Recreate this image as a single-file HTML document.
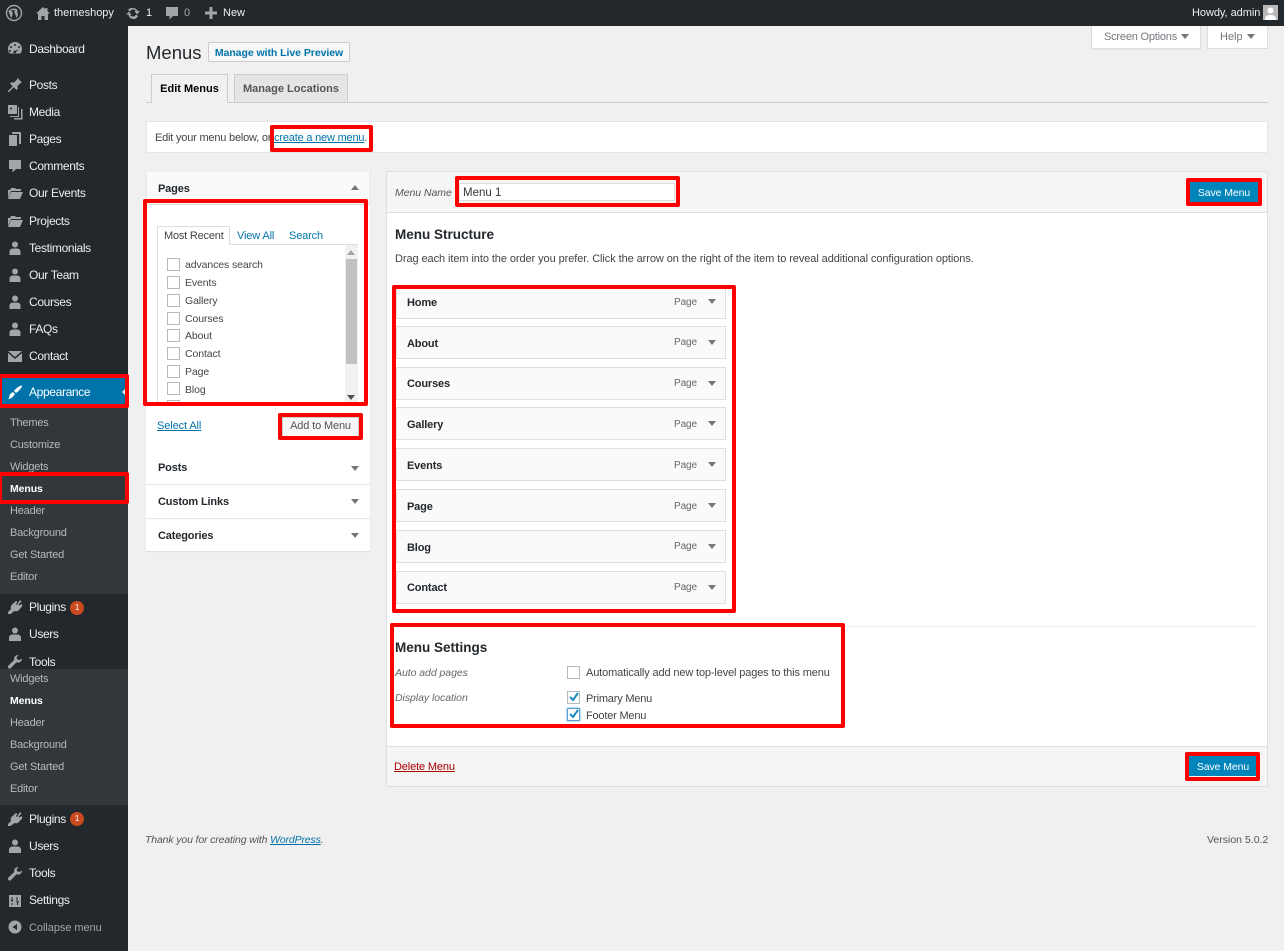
<!DOCTYPE html>
<html lang="en"><head><meta charset="utf-8"><title>Menus</title>
<style>
html,body{margin:0;padding:0;width:1284px;height:951px;overflow:hidden;background:#f0f0f0;font-family:"Liberation Sans",sans-serif;font-size:11px;letter-spacing:-.14px;color:#444}
.a{position:absolute;box-sizing:border-box}
.t{position:absolute;white-space:nowrap;line-height:18px;height:18px}
.m{color:#eee;font-size:12px;letter-spacing:-.35px;left:29px;line-height:16px;height:16px}
.s{color:#b4b9be;font-size:11px;letter-spacing:-.2px;left:10px}
.b{font-weight:bold;font-size:11px;letter-spacing:-.15px}
.l{color:#0073aa;text-decoration:underline}
.r{position:absolute;box-sizing:border-box;border:4px solid #f00;border-radius:2px}
.i{position:absolute;left:7px;width:16px;height:16px;fill:#a0a5aa}
.item{position:absolute;left:396px;width:330px;height:33px;box-sizing:border-box;background:#fafafa;border:1px solid #dfdfdf}
.cb{position:absolute;box-sizing:border-box;width:13px;height:13px;background:#fff;border:1px solid #b4b9be}
.tri{position:absolute;width:0;height:0;border-left:4px solid transparent;border-right:4px solid transparent;border-top:5px solid #72777c}
.up{border-top:0;border-bottom:5px solid #72777c}
.li{left:185px;font-size:10.5px;letter-spacing:-.1px}
.pg{left:674px;font-size:10px;letter-spacing:-.1px;color:#666}
.it{font-style:italic;color:#666;font-size:10.5px;letter-spacing:-.05px}
.sv{background:#0085ba;color:#fff;font-size:10.5px;letter-spacing:-.1px;line-height:22px;text-align:center}
</style></head><body>

<div class="a" style="left:0;top:0;width:1284px;height:26px;background:#23282d"></div>
<svg class="a" style="left:5px;top:4px;width:18px;height:18px" viewBox="0 0 18 18"><circle cx="9" cy="9" r="7.5" fill="none" stroke="#a0a5aa" stroke-width="1.4"/><path d="M3.4 7l2.8 7.5 1.600-4.600-1-2.900h-.9V6.300h4.200V7h-1l2.600 7.400 1-3c.5-1.500-.1-2.700-.6-3.500-.4-.7.100-1.700 1-1.700-2.800-2.700-7.500-2.100-9.300.7z" fill="#a0a5aa"/></svg>
<svg class="a" style="left:35px;top:5px;width:16px;height:16px" viewBox="0 0 16 16"><path d="M8 2L1 8.500h2V15h3.500v-4h3v4H13V8.500h2L12.500 6V3h-2v1.200z" fill="#a0a5aa"/></svg>
<span class="t" style="left:54px;top:4px;color:#eee;letter-spacing:0">themeshopy</span>
<svg class="a" style="left:125px;top:5px;width:16px;height:16px" viewBox="0 0 16 16"><path d="M8 3a5 5 0 0 1 4.600 3H15l-3 3.500L9.500 6h1.500A3.500 3.500 0 0 0 5 6.500L3 5a5 5 0 0 1 5-2zM1 9.500L4 6.500 6.500 10H5a3.500 3.500 0 0 0 6-.5l2 1.500a5 5 0 0 1-9.600-1.500z" fill="#a0a5aa"/></svg>
<span class="t" style="left:146px;top:4px;color:#eee">1</span>
<svg class="a" style="left:165px;top:5px;width:14px;height:16px" viewBox="0 0 14 16"><path d="M1 2h12v9H8l-3.500 3.500V11H1z" fill="#a0a5aa"/></svg>
<span class="t" style="left:184px;top:4px;color:#a0a5aa">0</span>
<svg class="a" style="left:205px;top:7px;width:12px;height:12px" viewBox="0 0 12 12"><path d="M4.500 0h3v4.500H12v3H7.500V12h-3V7.500H0v-3h4.500z" fill="#a0a5aa"/></svg>
<span class="t" style="left:223px;top:4px;color:#eee;letter-spacing:0">New</span>
<span class="t" style="left:1192px;top:4px;color:#eee;letter-spacing:-.05px">Howdy, admin</span>
<div class="a" style="left:1263px;top:5px;width:15px;height:15px;background:#b9b9b9"><svg width="15" height="15" viewBox="0 0 15 15" style="display:block"><circle cx="7.500" cy="5.500" r="3" fill="#fff"/><path d="M2 15c0-4 2-5 5.500-5s5.500 1 5.500 5z" fill="#fff"/></svg></div>

<div class="a" style="left:0;top:26px;width:128px;height:925px;background:#23282d"></div>
<div class="a" style="left:0;top:406px;width:128px;height:188px;background:#32373c"></div>
<div class="a" style="left:0;top:378px;width:128px;height:28px;background:#0073aa"></div>
<div class="a" style="left:122px;top:388px;border-top:4px solid transparent;border-bottom:4px solid transparent;border-right:4px solid #f1f1f1"></div>

<svg class="i" style="top:40px" viewBox="0 0 16 16"><path d="M8 2a7 7 0 0 0-7 7c0 1.800.6 3.400 1.700 4.500h10.600A7 7 0 0 0 8 2zm0 2a1 1 0 1 1 0 2 1 1 0 0 1 0-2zM4 6a1 1 0 1 1 0 2 1 1 0 0 1 0-2zm8 0a1 1 0 1 1 0 2 1 1 0 0 1 0-2zM3 10a1 1 0 1 1 0 2 1 1 0 0 1 0-2zm9.500-.5L9 11.800a1.300 1.300 0 1 1-1-1.100z"/></svg>
<span class="t m" style="top:41px">Dashboard</span>
<svg class="i" style="top:77px" viewBox="0 0 16 16"><path d="M10.500 1l4.500 4.500-1.500.5-3 3 .2 2.800-1.200 1.200-2.700-2.700L2 15l-1 0 0-1 4.700-4.800L3 6.500l1.200-1.200 2.800.2 3-3z"/></svg>
<span class="t m" style="top:77px">Posts</span>
<svg class="i" style="top:104px" viewBox="0 0 16 16"><path d="M1 1h9v9H1zm3 2.500a1 1 0 1 0 0 2 1 1 0 0 0 0-2zM3 12h8V3h1v10H3zm4 2h7V5h1.500v10.500H7zM2 8.500L5 6l3 2.500z"/></svg>
<span class="t m" style="top:104px">Media</span>
<svg class="i" style="top:131px" viewBox="0 0 16 16"><path d="M5 1h9v12h-2V3H5zM2 4h8v11H2z"/></svg>
<span class="t m" style="top:131px">Pages</span>
<svg class="i" style="top:158px" viewBox="0 0 16 16"><path d="M2 2h12v9H9l-3.500 3.500V11H2z"/></svg>
<span class="t m" style="top:158px">Comments</span>
<svg class="i" style="top:185px" viewBox="0 0 16 16"><path d="M1 5h2l1-2h4l1 1h5v2H4l-3 7zm3 2h12l-3 7H1z"/></svg>
<span class="t m" style="top:185px">Our Events</span>
<svg class="i" style="top:213px" viewBox="0 0 16 16"><path d="M1 5h2l1-2h4l1 1h5v2H4l-3 7zm3 2h12l-3 7H1z"/></svg>
<span class="t m" style="top:213px">Projects</span>
<svg class="i" style="top:240px" viewBox="0 0 16 16"><circle cx="8" cy="4.500" r="3"/><path d="M2.500 15v-3.500c0-2 2-3 3.500-3h4c1.500 0 3.500 1 3.500 3V15z"/></svg>
<span class="t m" style="top:240px">Testimonials</span>
<svg class="i" style="top:267px" viewBox="0 0 16 16"><circle cx="8" cy="4.500" r="3"/><path d="M2.500 15v-3.500c0-2 2-3 3.500-3h4c1.500 0 3.500 1 3.500 3V15z"/></svg>
<span class="t m" style="top:267px">Our Team</span>
<svg class="i" style="top:294px" viewBox="0 0 16 16"><circle cx="8" cy="4.500" r="3"/><path d="M2.500 15v-3.500c0-2 2-3 3.500-3h4c1.500 0 3.500 1 3.500 3V15z"/></svg>
<span class="t m" style="top:294px">Courses</span>
<svg class="i" style="top:321px" viewBox="0 0 16 16"><circle cx="8" cy="4.500" r="3"/><path d="M2.500 15v-3.500c0-2 2-3 3.500-3h4c1.500 0 3.500 1 3.500 3V15z"/></svg>
<span class="t m" style="top:321px">FAQs</span>
<svg class="i" style="top:348px" viewBox="0 0 16 16"><path d="M1 3h14l-7 6zM1 5l7 6 7-6v9H1z"/></svg>
<span class="t m" style="top:348px">Contact</span>
<svg class="i" style="top:384px;fill:#fff" viewBox="0 0 16 16"><path d="M15 1.500c.5 1.500-3 5.500-6 7.500L7 7c2-3 6.500-6 8-5.500zM6 8l2 2-2 2.500C5 14 3 15 1 15c1-1 1.500-2 1.500-3 0-2 2-3 3.500-4z"/></svg>
<span class="t m" style="top:384px;color:#fff">Appearance</span>

<span class="t s" style="top:414px">Themes</span>
<span class="t s" style="top:436px">Customize</span>
<span class="t s" style="top:458px">Widgets</span>
<span class="t s" style="top:480px;color:#fff;font-weight:bold;font-size:10.5px;letter-spacing:-.1px">Menus</span>
<span class="t s" style="top:502px">Header</span>
<span class="t s" style="top:524px">Background</span>
<span class="t s" style="top:546px">Get Started</span>
<span class="t s" style="top:568px">Editor</span>

<svg class="i" style="top:599px" viewBox="0 0 16 16"><path d="M13 1l1.500 1.500-3 3 1 1 2-1.500L15.500 7l-4 4.500c-1.500 1-3 1-4 .5L3.500 15 1 15l0-2 3-3c-.5-1-.5-2.500.5-4L9 2l1.500 1-1.500 2 1 1z"/></svg>
<span class="t m" style="top:599px">Plugins</span>
<div class="a" style="left:70px;top:601px;width:14px;height:14px;border-radius:7px;background:#ca4a1f;color:#fff;font-size:8px;line-height:14px;text-align:center">1</div>
<svg class="i" style="top:626px" viewBox="0 0 16 16"><circle cx="8" cy="4.500" r="3"/><path d="M2 15v-3.500c0-2 2-3 3.500-3h5c1.500 0 3.500 1 3.500 3V15z"/></svg>
<span class="t m" style="top:626px">Users</span>
<svg class="i" style="top:654px" viewBox="0 0 16 16"><path d="M15 4.500a4 4 0 0 1-5.500 3.800L4 14a1.700 1.700 0 0 1-2.500-2.500l5.700-5.500A4 4 0 0 1 11.500 1L9.500 3.500l1 2 2 .5z"/></svg>
<span class="t m" style="top:654px">Tools</span>
<div class="a" style="left:0;top:669px;width:128px;height:136px;background:#32373c"></div>
<span class="t s" style="top:670px">Widgets</span>
<span class="t s" style="top:692px;color:#fff;font-weight:bold;font-size:10.5px;letter-spacing:-.1px">Menus</span>
<span class="t s" style="top:714px">Header</span>
<span class="t s" style="top:736px">Background</span>
<span class="t s" style="top:758px">Get Started</span>
<span class="t s" style="top:780px">Editor</span>

<svg class="i" style="top:811px" viewBox="0 0 16 16"><path d="M13 1l1.500 1.500-3 3 1 1 2-1.500L15.500 7l-4 4.500c-1.500 1-3 1-4 .5L3.500 15 1 15l0-2 3-3c-.5-1-.5-2.500.5-4L9 2l1.500 1-1.500 2 1 1z"/></svg>
<span class="t m" style="top:811px">Plugins</span>
<div class="a" style="left:70px;top:812px;width:14px;height:14px;border-radius:7px;background:#ca4a1f;color:#fff;font-size:8px;line-height:14px;text-align:center">1</div>
<svg class="i" style="top:838px" viewBox="0 0 16 16"><circle cx="8" cy="4.500" r="3"/><path d="M2 15v-3.500c0-2 2-3 3.500-3h5c1.500 0 3.500 1 3.500 3V15z"/></svg>
<span class="t m" style="top:838px">Users</span>
<svg class="i" style="top:866px" viewBox="0 0 16 16"><path d="M15 4.500a4 4 0 0 1-5.500 3.800L4 14a1.700 1.700 0 0 1-2.500-2.500l5.700-5.500A4 4 0 0 1 11.500 1L9.500 3.500l1 2 2 .5z"/></svg>
<span class="t m" style="top:865px">Tools</span>
<svg class="i" style="top:893px" viewBox="0 0 16 16"><path d="M2 2h12v12H2zm2.500 2v3H3.500l1.500 2 1.500-2H5.500V4zm5 0v5h1V4zm-5 6v2h1v-2zm4.200-2l1.300 2v2h1v-2l1.300-2z"/></svg>
<span class="t m" style="top:892px">Settings</span>
<svg class="i" style="top:919px" viewBox="0 0 16 16"><path d="M8 1.500a6.500 6.500 0 1 1 0 13 6.500 6.500 0 0 1 0-13zM10 5L5.500 8l4.500 3z"/></svg>
<span class="t" style="left:29px;top:919px;color:#a0a5aa;font-size:11px;letter-spacing:-.05px">Collapse menu</span>

<div class="a" style="left:1091px;top:26px;width:110px;height:23px;background:#fff;border:1px solid #ddd;border-top:0;box-shadow:0 1px 1px rgba(0,0,0,.04)"></div>
<span class="t" style="left:1104px;top:28px;color:#72777c;letter-spacing:-.2px">Screen Options</span>
<div class="tri" style="left:1181px;top:34px"></div>
<div class="a" style="left:1207px;top:26px;width:61px;height:23px;background:#fff;border:1px solid #ddd;border-top:0"></div>
<span class="t" style="left:1220px;top:28px;color:#72777c;letter-spacing:0">Help</span>
<div class="tri" style="left:1247px;top:34px"></div>

<span class="t" style="left:146px;top:41px;font-size:18.5px;letter-spacing:0;line-height:24px;height:24px;color:#23282d">Menus</span>
<div class="a" style="left:208px;top:42px;width:142px;height:20px;background:#f7f7f7;border:1px solid #ccc;border-radius:2px;color:#0073aa;font-weight:bold;font-size:10.5px;letter-spacing:-.05px;line-height:20px;text-align:center">Manage with Live Preview</div>

<div class="a" style="left:146px;top:102px;width:1122px;height:1px;background:#ccc"></div>
<div class="a" style="left:151px;top:74px;width:77px;height:29px;background:#f0f0f0;border:1px solid #ccc;border-bottom:0;color:#000;font-weight:bold;font-size:11px;letter-spacing:0;line-height:29px;text-align:center">Edit Menus</div>
<div class="a" style="left:234px;top:74px;width:114px;height:28px;background:#e5e5e5;border:1px solid #ccc;border-bottom:0;color:#555;font-weight:bold;font-size:11px;letter-spacing:0;line-height:29px;text-align:center">Manage Locations</div>

<div class="a" style="left:146px;top:121px;width:1122px;height:32px;background:#fff;border:1px solid #e5e5e5"></div>
<span class="t" style="left:155px;top:129px;letter-spacing:-.2px">Edit your menu below, or <span class="l">create a new menu</span>.</span>

<div class="a" style="left:146px;top:171px;width:224px;height:380px;background:#fff;box-shadow:0 1px 1px rgba(0,0,0,.08)"></div>
<div class="a" style="left:146px;top:171px;width:224px;height:34px;background:#fafafa;border:1px solid #eee;border-bottom:1px solid #ddd"></div>
<span class="t b" style="left:158px;top:180px;color:#23282d">Pages</span>
<div class="tri up" style="left:351px;top:185px"></div>

<div class="a" style="left:157px;top:244px;width:201px;height:1px;background:#ddd"></div>
<div class="a" style="left:157px;top:226px;width:73px;height:19px;background:#fff;border:1px solid #ddd;border-bottom:0"></div>
<span class="t" style="left:164px;top:227px;letter-spacing:-.2px">Most Recent</span>
<span class="t" style="left:237px;top:227px;color:#0073aa">View All</span>
<span class="t" style="left:289px;top:227px;color:#0073aa">Search</span>
<div class="a" style="left:157px;top:244px;width:1px;height:160px;background:#ddd"></div>
<div class="a" style="left:345px;top:245px;width:13px;height:159px;background:#f1f1f1"></div>
<div class="a" style="left:346px;top:259px;width:11px;height:105px;background:#c1c1c1"></div>
<div class="tri up" style="left:347px;top:250px;border-bottom-color:#a3a3a3"></div>
<div class="tri" style="left:347px;top:395px;border-top-color:#505050"></div>

<div class="cb" style="left:167px;top:258px"></div><span class="t li" style="top:256px">advances search</span>
<div class="cb" style="left:167px;top:276px"></div><span class="t li" style="top:274px">Events</span>
<div class="cb" style="left:167px;top:294px"></div><span class="t li" style="top:292px">Gallery</span>
<div class="cb" style="left:167px;top:312px"></div><span class="t li" style="top:310px">Courses</span>
<div class="cb" style="left:167px;top:329px"></div><span class="t li" style="top:327px">About</span>
<div class="cb" style="left:167px;top:347px"></div><span class="t li" style="top:345px">Contact</span>
<div class="cb" style="left:167px;top:365px"></div><span class="t li" style="top:363px">Page</span>
<div class="cb" style="left:167px;top:382px"></div><span class="t li" style="top:381px">Blog</span>
<div class="a" style="left:167px;top:400px;width:13px;height:4px;border:1px solid #b4b9be;border-bottom:0"></div>

<span class="t l" style="left:157px;top:417px;letter-spacing:-.1px">Select All</span>
<div class="a" style="left:282px;top:417px;width:77px;height:20px;background:#f7f7f7;border:1px solid #ccc;color:#555;line-height:17px;text-align:center">Add to Menu</div>

<div class="a" style="left:146px;top:484px;width:224px;height:1px;background:#e5e5e5"></div>
<div class="a" style="left:146px;top:518px;width:224px;height:1px;background:#e5e5e5"></div>
<span class="t b" style="left:158px;top:459px;color:#23282d">Posts</span><div class="tri" style="left:351px;top:466px"></div>
<span class="t b" style="left:158px;top:493px;color:#23282d">Custom Links</span><div class="tri" style="left:351px;top:499px"></div>
<span class="t b" style="left:158px;top:527px;color:#23282d">Categories</span><div class="tri" style="left:351px;top:533px"></div>

<div class="a" style="left:386px;top:171px;width:882px;height:616px;background:#fff;border:1px solid #e0e0e0"></div>
<div class="a" style="left:386px;top:171px;width:882px;height:42px;background:#f5f5f5;border:1px solid #dfdfdf"></div>
<div class="a" style="left:386px;top:746px;width:882px;height:41px;background:#f5f5f5;border:1px solid #dfdfdf"></div>
<span class="t" style="left:395px;top:184px;font-style:italic;color:#555;font-size:10.5px;letter-spacing:-.05px">Menu Name</span>
<div class="a" style="left:459px;top:183px;width:216px;height:18px;background:#fff;border:1px solid #ddd;color:#32373c;font-size:11.5px;letter-spacing:0;line-height:18px;padding-left:3px">Menu 1</div>
<div class="a sv" style="left:1190px;top:182px;width:68px;height:20px">Save Menu</div>

<span class="t b" style="left:395px;top:227px;font-size:13.5px;letter-spacing:0;line-height:16px;color:#23282d">Menu Structure</span>
<span class="t" style="left:395px;top:250px;letter-spacing:-.08px">Drag each item into the order you prefer. Click the arrow on the right of the item to reveal additional configuration options.</span>

<div class="item" style="top:286px"></div><span class="t b" style="left:407px;top:294px;color:#23282d">Home</span><span class="t pg" style="top:294px">Page</span><div class="tri" style="left:708px;top:299px"></div>
<div class="item" style="top:326px"></div><span class="t b" style="left:407px;top:335px;color:#23282d">About</span><span class="t pg" style="top:334px">Page</span><div class="tri" style="left:708px;top:340px"></div>
<div class="item" style="top:367px"></div><span class="t b" style="left:407px;top:375px;color:#23282d">Courses</span><span class="t pg" style="top:375px">Page</span><div class="tri" style="left:708px;top:381px"></div>
<div class="item" style="top:407px"></div><span class="t b" style="left:407px;top:416px;color:#23282d">Gallery</span><span class="t pg" style="top:416px">Page</span><div class="tri" style="left:708px;top:421px"></div>
<div class="item" style="top:448px"></div><span class="t b" style="left:407px;top:457px;color:#23282d">Events</span><span class="t pg" style="top:457px">Page</span><div class="tri" style="left:708px;top:462px"></div>
<div class="item" style="top:489px"></div><span class="t b" style="left:407px;top:498px;color:#23282d">Page</span><span class="t pg" style="top:498px">Page</span><div class="tri" style="left:708px;top:503px"></div>
<div class="item" style="top:530px"></div><span class="t b" style="left:407px;top:539px;color:#23282d">Blog</span><span class="t pg" style="top:538px">Page</span><div class="tri" style="left:708px;top:544px"></div>
<div class="item" style="top:571px"></div><span class="t b" style="left:407px;top:579px;color:#23282d">Contact</span><span class="t pg" style="top:579px">Page</span><div class="tri" style="left:708px;top:585px"></div>

<div class="a" style="left:395px;top:626px;width:863px;height:1px;background:#eee"></div>
<span class="t b" style="left:395px;top:640px;font-size:13.5px;letter-spacing:0;line-height:16px;color:#23282d">Menu Settings</span>
<span class="t it" style="left:395px;top:664px">Auto add pages</span>
<span class="t it" style="left:395px;top:689px">Display location</span>
<div class="cb" style="left:567px;top:666px"></div><span class="t" style="left:586px;top:664px">Automatically add new top-level pages to this menu</span>
<div class="cb" style="left:567px;top:691px"></div><span class="t" style="left:586px;top:690px;letter-spacing:-.2px">Primary Menu</span>
<svg class="a" style="left:568px;top:691px;width:12px;height:12px" viewBox="0 0 12 12"><path d="M2 6l3 3 5-7" fill="none" stroke="#1e8cbe" stroke-width="2"/></svg>
<div class="cb" style="left:567px;top:708px;border-color:#5b9dd9;box-shadow:0 0 2px rgba(30,140,190,.8)"></div><span class="t" style="left:586px;top:707px;letter-spacing:-.2px">Footer Menu</span>
<svg class="a" style="left:568px;top:708px;width:12px;height:12px" viewBox="0 0 12 12"><path d="M2 6l3 3 5-7" fill="none" stroke="#1e8cbe" stroke-width="2"/></svg>

<span class="t" style="left:394px;top:758px;color:#a00;text-decoration:underline">Delete Menu</span>
<div class="a sv" style="left:1189px;top:756px;width:68px;height:20px">Save Menu</div>

<span class="t" style="left:145px;top:831px;font-style:italic;color:#555;font-size:10.5px">Thank you for creating with <span class="l">WordPress</span>.</span>
<span class="t" style="left:1207px;top:831px;color:#555;font-size:10.5px;letter-spacing:0">Version 5.0.2</span>

<div class="r" style="left:270px;top:125px;width:103px;height:27px"></div>
<div class="r" style="left:143px;top:199px;width:225px;height:207px"></div>
<div class="r" style="left:278px;top:413px;width:85px;height:27px"></div>
<div class="r" style="left:-2px;top:374px;width:131px;height:34px"></div>
<div class="r" style="left:-2px;top:472px;width:131px;height:32px"></div>
<div class="r" style="left:455px;top:176px;width:225px;height:31px"></div>
<div class="r" style="left:1186px;top:178px;width:76px;height:28px"></div>
<div class="r" style="left:392px;top:285px;width:344px;height:328px"></div>
<div class="r" style="left:390px;top:623px;width:455px;height:105px"></div>
<div class="r" style="left:1185px;top:752px;width:75px;height:29px"></div>
</body></html>
